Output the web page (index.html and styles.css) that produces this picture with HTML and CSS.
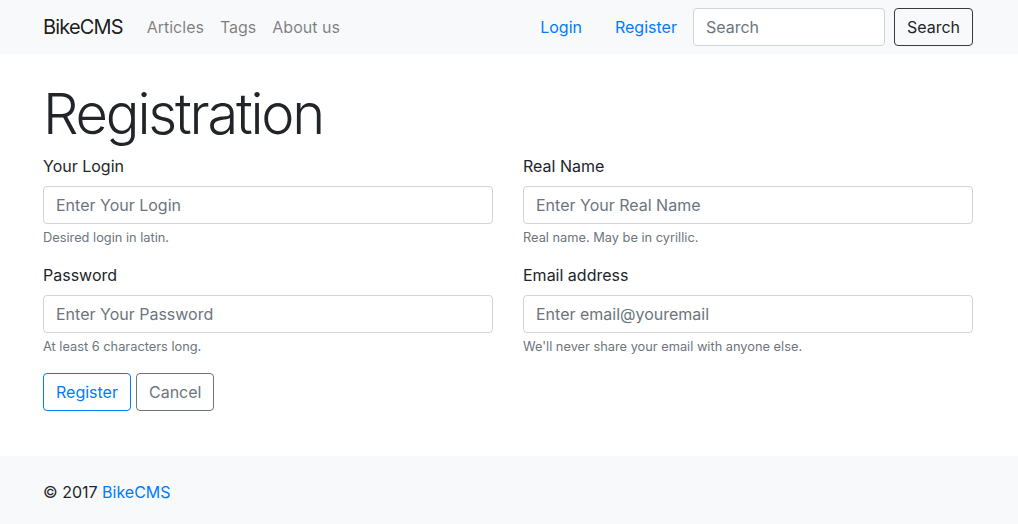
FILE: index.html
```html
<!DOCTYPE html>
<html lang="en">
<head>
<meta charset="utf-8">
<title>BikeCMS - Registration</title>
<link rel="stylesheet" href="styles.css">
</head>
<body>
<nav class="navbar">
  <div class="container nav-inner">
    <a class="brand" href="#">BikeCMS</a>
    <ul class="nav nav-left">
      <li><a class="nav-link" href="#">Articles</a></li>
      <li><a class="nav-link" href="#">Tags</a></li>
      <li><a class="nav-link" href="#">About us</a></li>
    </ul>
    <ul class="nav nav-right">
      <li class="nav-login"><a class="nav-link active" href="#">Login</a></li>
      <li><a class="nav-link active" href="#">Register</a></li>
    </ul>
    <form class="search-form">
      <input class="form-control search-input" type="search" placeholder="Search">
      <button class="btn btn-dark-outline" type="button">Search</button>
    </form>
  </div>
</nav>

<main class="container main">
  <h1 class="display">Registration</h1>
  <form class="reg-form">
    <div class="row">
      <div class="col">
        <div class="form-group">
          <label class="label">Your Login</label>
          <input class="form-control" type="text" placeholder="Enter Your Login">
          <small class="help">Desired login in latin.</small>
        </div>
        <div class="form-group">
          <label class="label">Password</label>
          <input class="form-control" type="password" placeholder="Enter Your Password">
          <small class="help">At least 6 characters long.</small>
        </div>
      </div>
      <div class="col">
        <div class="form-group">
          <label class="label">Real Name</label>
          <input class="form-control" type="text" placeholder="Enter Your Real Name">
          <small class="help">Real name. May be in cyrillic.</small>
        </div>
        <div class="form-group">
          <label class="label">Email address</label>
          <input class="form-control" type="email" placeholder="Enter email@youremail">
          <small class="help">We'll never share your email with anyone else.</small>
        </div>
      </div>
    </div>
    <div class="actions">
      <button class="btn btn-primary-outline" type="button">Register</button>
      <button class="btn btn-secondary-outline" type="button">Cancel</button>
    </div>
  </form>
</main>

<footer class="footer">
  <div class="container">
    <span>© 2017 <a class="footer-link" href="#">BikeCMS</a></span>
  </div>
</footer>
</body>
</html>
```

FILE: styles.css
```css
* { box-sizing: border-box; }

html, body {
  margin: 0;
  padding: 0;
}

body {
  font-family: Inter, "Noto Sans", "Liberation Sans", sans-serif;
  font-size: 16px;
  line-height: 1.5;
  color: #212529;
  background: #fff;
}

a { text-decoration: none; }

.container {
  width: 960px;
  margin: 0 auto;
  padding: 0 16px 0 14px;
}

/* Form controls */
.form-control {
  display: block;
  width: 100%;
  height: 38px;
  padding: 6px 12px;
  font-family: inherit;
  font-size: 16px;
  line-height: 1.5;
  color: #495057;
  background: #fff;
  border: 1px solid #ced4da;
  border-radius: 4px;
}

.form-control::placeholder { color: #6c757d; opacity: 1; }

.btn {
  display: inline-block;
  height: 38px;
  padding: 6px 12px;
  font-family: inherit;
  font-size: 16px;
  line-height: 1.5;
  background: transparent;
  border: 1px solid;
  border-radius: 4px;
  cursor: pointer;
}

.btn-dark-outline { color: #212529; border-color: #343a40; }
.btn-primary-outline { color: #007bff; border-color: #007bff; }
.btn-secondary-outline { color: #6c757d; border-color: #6c757d; }

/* Navbar */
.navbar {
  background: #f8f9fa;
  padding: 8px 0;
}

.nav-inner {
  display: flex;
  align-items: center;
}

.brand {
  font-size: 20px;
  line-height: 30px;
  letter-spacing: -0.85px;
  color: rgba(0, 0, 0, 0.9);
  margin-right: 16px;
  padding: 4px 0;
}

.nav {
  list-style: none;
  margin: 0;
  padding: 0;
  display: flex;
}

.nav-left { flex: 1; }

.nav-link {
  display: block;
  padding: 7px 8px;
  color: rgba(0, 0, 0, 0.5);
}

.nav-link.active { color: #007bff; }

.nav-login { margin-right: 17px; }

.search-form {
  display: flex;
  align-items: center;
  margin-left: 8px;
}

.search-form .search-input {
  width: 192px;
  margin-right: 9px;
}

/* Main */
.main {
  padding-top: 25px;
  padding-bottom: 45px;
}

.display {
  font-size: 56px;
  font-weight: 300;
  line-height: 1.2;
  margin: 0 0 6px;
  padding-top: 2px;
  letter-spacing: -2.2px;
}

.row {
  display: flex;
  gap: 30px;
}

.col { flex: 1; min-width: 0; }

.form-group { margin-bottom: 16px; }

.label {
  display: block;
  margin-bottom: 8px;
}

.help {
  display: block;
  margin-top: 4px;
  font-size: 12.8px;
  line-height: 1.5;
  color: #6c757d;
}

.actions {
  display: flex;
  gap: 5px;
}

/* Footer */
.footer {
  background: #f8f9fa;
  padding: 24px 0;
}

.footer-link { color: #007bff; }
```
